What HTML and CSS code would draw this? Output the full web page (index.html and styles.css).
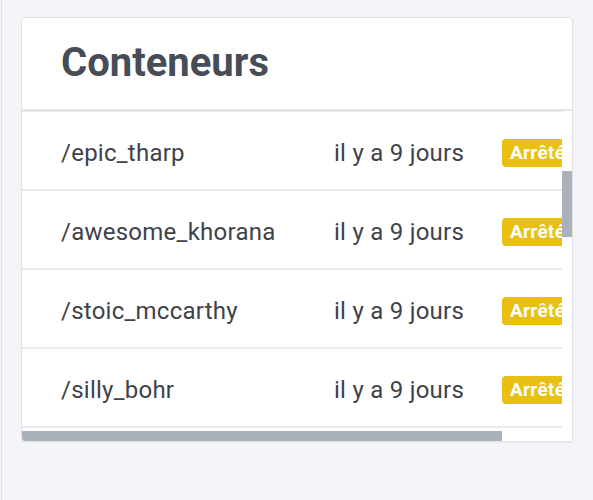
FILE: index.html
```html
<!DOCTYPE html>
<html lang="fr">
<head>
<meta charset="utf-8">
<title>Conteneurs</title>
<link rel="stylesheet" href="styles.css">
</head>
<body>
<div class="page">
  <section class="card">
    <header class="card-header">
      <h1 class="card-title">Conteneurs</h1>
    </header>
    <div class="scroll-frame">
      <div class="scroller" id="containers">
        <table class="table">
          <colgroup>
            <col class="col-name">
            <col class="col-date">
            <col class="col-state">
          </colgroup>
          <thead>
            <tr><th>Nom</th><th>Créé</th><th>État</th></tr>
          </thead>
          <tbody>
            <tr><td>/admiring_hopper</td><td>il y a 9 jours</td><td><span class="badge">Arrêté</span></td></tr>
            <tr><td>/brave_lovelace</td><td>il y a 9 jours</td><td><span class="badge">Arrêté</span></td></tr>
            <tr><td>/clever_turing</td><td>il y a 9 jours</td><td><span class="badge">Arrêté</span></td></tr>
            <tr><td>/epic_tharp</td><td>il y a 9 jours</td><td><span class="badge">Arrêté</span></td></tr>
            <tr><td>/awesome_khorana</td><td>il y a 9 jours</td><td><span class="badge">Arrêté</span></td></tr>
            <tr><td>/stoic_mccarthy</td><td>il y a 9 jours</td><td><span class="badge">Arrêté</span></td></tr>
            <tr><td>/silly_bohr</td><td>il y a 9 jours</td><td><span class="badge">Arrêté</span></td></tr>
            <tr><td>/nervous_curie</td><td>il y a 9 jours</td><td><span class="badge">Arrêté</span></td></tr>
            <tr><td>/happy_darwin</td><td>il y a 9 jours</td><td><span class="badge">Arrêté</span></td></tr>
            <tr><td>/jolly_euler</td><td>il y a 9 jours</td><td><span class="badge">Arrêté</span></td></tr>
            <tr><td>/keen_fermat</td><td>il y a 9 jours</td><td><span class="badge">Arrêté</span></td></tr>
            <tr><td>/laughing_gauss</td><td>il y a 9 jours</td><td><span class="badge">Arrêté</span></td></tr>
            <tr><td>/modest_hertz</td><td>il y a 9 jours</td><td><span class="badge">Arrêté</span></td></tr>
            <tr><td>/naughty_kepler</td><td>il y a 9 jours</td><td><span class="badge">Arrêté</span></td></tr>
            <tr><td>/pensive_mayer</td><td>il y a 9 jours</td><td><span class="badge">Arrêté</span></td></tr>
            <tr><td>/quirky_noether</td><td>il y a 9 jours</td><td><span class="badge">Arrêté</span></td></tr>
            <tr><td>/relaxed_pascal</td><td>il y a 9 jours</td><td><span class="badge">Arrêté</span></td></tr>
            <tr><td>/sharp_raman</td><td>il y a 9 jours</td><td><span class="badge">Arrêté</span></td></tr>
            <tr><td>/vibrant_tesla</td><td>il y a 9 jours</td><td><span class="badge">Arrêté</span></td></tr>
          </tbody>
        </table>
      </div>
      <div class="vtrack" aria-hidden="true"><div class="vthumb"></div></div>
      <div class="htrack" aria-hidden="true"><div class="hthumb"></div></div>
      <div class="corner" aria-hidden="true"></div>
    </div>
  </section>
</div>
<script src="script.js"></script>
</body>
</html>
```

FILE: styles.css
```css
* {
  box-sizing: border-box;
}

html,
body {
  margin: 0;
  padding: 0;
  background: #f4f5f8;
}

body {
  font-family: Roboto, "Noto Sans", "Liberation Sans", sans-serif;
  color: #3e434a;
}

.page {
  min-height: 100vh;
  margin-left: 1px;
  border-left: 1px solid #dfe2e6;
  padding: 17px 20px 0 19px;
}

.card {
  width: 552px;
  background: #ffffff;
  border: 1px solid #e1e3e7;
  border-radius: 4px;
  box-shadow: 0 1px 2px rgba(30, 40, 60, 0.05);
  overflow: hidden;
}

.card-header {
  padding: 21px 39px 22px;
  border-bottom: 2px solid #e2e4e8;
}

.card-title {
  margin: 0;
  font-size: 40px;
  line-height: 48px;
  font-weight: 700;
  color: #464d56;
}

.scroll-frame {
  display: grid;
  grid-template-columns: 540px 10px;
  grid-template-rows: 320px 10px;
  background: #ffffff;
}

.scroller {
  overflow: hidden;
  scrollbar-width: none;
}

.vtrack {
  display: flex;
  flex-direction: column;
  background: #ffffff;
}

.vthumb {
  margin-top: 60px;
  height: 66px;
  background: #aab1b8;
}

.htrack {
  display: flex;
  background: #ffffff;
}

.hthumb {
  width: 480px;
  height: 10px;
  background: #aab1b8;
}

.corner {
  background: #ffffff;
}

.table {
  width: 608px;
  table-layout: fixed;
  border-collapse: collapse;
  font-size: 24px;
  line-height: 28px;
}

.col-name {
  width: 272px;
}

.col-date {
  width: 168px;
}

.col-state {
  width: 168px;
}

.table th {
  height: 54px;
  padding: 0 0 0 40px;
  text-align: left;
  font-size: 18px;
  font-weight: 700;
  color: #6b727b;
  border-bottom: 2px solid #e9eaec;
  white-space: nowrap;
}

.table td {
  height: 79px;
  padding: 4px 0 0 40px;
  vertical-align: middle;
  border-bottom: 2px solid #e9eaec;
  white-space: nowrap;
  letter-spacing: 0.25px;
}

.table th:first-child,
.table td:first-child {
  padding-left: 39px;
}

.badge {
  display: inline-block;
  vertical-align: middle;
  height: 28px;
  padding: 0 8px;
  border-radius: 4px;
  background: #eabf14;
  color: #ffffff;
  font-size: 19px;
  line-height: 28px;
  font-weight: 700;
  letter-spacing: 0.3px;
}
```

FILE: script.js
```js
var scroller = document.getElementById('containers');
scroller.scrollTop = 291;
scroller.scrollLeft = 0;
```
